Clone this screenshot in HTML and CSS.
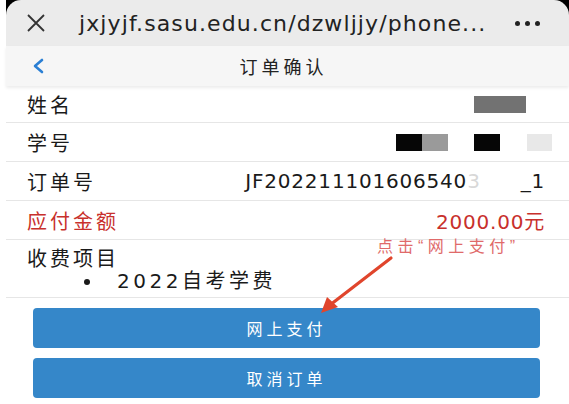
FILE: index.html
```html
<!DOCTYPE html>
<html lang="zh">
<head>
<meta charset="utf-8">
<link rel="stylesheet" href="styles.css">
</head>
<body>
<div class="screen">
  <div class="chrome">
    <div class="urlbar">
      <span class="close">
        <svg width="20" height="20" viewBox="0 0 20 20"><path d="M2 2 L18 18 M18 2 L2 18" stroke="#333" stroke-width="1.8" fill="none"/></svg>
      </span>
      <span class="url">jxjyjf.sasu.edu.cn/dzwljjy/phone...</span>
      <span class="more"><i></i><i></i><i></i></span>
    </div>
    <div class="navbar">
      <span class="back">
        <svg width="14" height="16" viewBox="0 0 14 16"><path d="M10 2 L3 8 L10 14" stroke="#2a7fd4" stroke-width="2.6" fill="none" stroke-linecap="round" stroke-linejoin="round"/></svg>
      </span>
      <span class="title">订单确认</span>
      <span class="spacer"></span>
    </div>
  </div>
  <div class="list">
    <div class="row">
      <span class="label">姓名</span>
      <span class="value"><i class="blk gray w52"></i></span>
    </div>
    <div class="row">
      <span class="label">学号</span>
      <span class="value ids"><i class="blk black w26"></i><i class="blk mid w26"></i><i class="blk gap26"></i><i class="blk black w26"></i><i class="blk gap27"></i><i class="blk light w25"></i></span>
    </div>
    <div class="row">
      <span class="label">订单号</span>
      <span class="value num">JF202211101606540<span class="faded">3</span><span class="hole"></span>_1</span>
    </div>
    <div class="row red">
      <span class="label">应付金额</span>
      <span class="value num">2000.00元</span>
    </div>
    <div class="row items">
      <span class="label">收费项目</span>
      <ul class="fees"><li>2022自考学费</li></ul>
      <span class="hint">点击“网上支付”</span>
    </div>
  </div>
  <div class="actions">
    <button class="btn">网上支付</button>
    <button class="btn">取消订单</button>
  </div>
  <svg class="arrow" width="569" height="404" viewBox="0 0 569 404">
    <path d="M391 258 L330 305" stroke="#e0452c" stroke-width="3.2" fill="none" stroke-linecap="round"/>
    <path d="M321 313 L327 297 L338 307 Z" fill="#e0452c"/>
  </svg>
</div>
</body>
</html>
```
FILE: styles.css
```css
* { box-sizing: border-box; }
html, body { margin: 0; padding: 0; background: #fff; }
body {
  width: 569px;
  height: 404px;
  overflow: hidden;
  font-family: "DejaVu Sans", "Noto Sans CJK SC", sans-serif;
  color: #1a1a1a;
}
.screen { position: relative; width: 569px; height: 404px; }
.chrome {
  margin-left: 6px;
  background: linear-gradient(#000 0, #000 18px, transparent 18px);
}
.urlbar {
  height: 46px;
  background: #ebebeb;
  border-radius: 15px 15px 0 0;
  display: flex;
  align-items: center;
  padding: 0 0 0 20px;
}
.close { width: 20px; height: 20px; display: flex; }
.url {
  margin-left: 33px;
  font-size: 22px;
  letter-spacing: 1.1px;
  color: #222;
  flex: 1;
  white-space: nowrap;
}
.more { display: flex; gap: 5px; margin-right: 29px; }
.more i { width: 5px; height: 5px; border-radius: 50%; background: #222; display: block; }
.navbar {
  height: 40px;
  background: #f6f6f6;
  display: flex;
  align-items: center;
  padding: 0 0 0 26px;
  box-shadow: 0 2px 3px rgba(0,0,0,0.08);
  position: relative;
}
.back { width: 14px; height: 16px; display: flex; }
.title {
  flex: 1;
  text-align: center;
  font-family: "Noto Sans CJK SC", sans-serif;
  font-size: 18px;
  letter-spacing: 4px;
  color: #222;
  margin-left: -8px;
}
.spacer { width: 40px; }
.list { margin-left: 6px; }
.row {
  height: 39px;
  border-bottom: 1px solid #e6e6e6;
  display: flex;
  align-items: center;
  justify-content: space-between;
  padding: 0 24px 0 21px;
}
.row:first-child { height: 37px; }
.label {
  font-family: "Noto Sans CJK SC", sans-serif;
  font-size: 20px;
  letter-spacing: 3px;
  color: #1a1a1a;
}
.value { display: flex; align-items: center; }
.num { font-size: 20px; letter-spacing: 0.8px; color: #1a1a1a; display: block; }
.red .label, .red .num { color: #c8302c; }
.blk { display: block; height: 17px; }
.w52 { width: 52px; }
.w26 { width: 26px; }
.w25 { width: 25px; }
.gap26 { width: 26px; }
.gap27 { width: 27px; }
.gray { background: #727272; margin-right: 19px; }
.black { background: #060606; }
.mid { background: #9a9a9a; }
.light { background: #e8e8e8; }
.ids { margin-right: -7px; }
.faded { color: #d8d8d8; }
.hole { display: inline-block; width: 40px; }
.items {
  height: 58px;
  display: block;
  position: relative;
  padding-top: 6px;
}
.items .label { display: block; line-height: 24px; }
.fees {
  margin: 0;
  padding-left: 76px;
  line-height: 23px;
  font-size: 20px;
  letter-spacing: 3.5px;
}
.fees li { padding-left: 14px; }
.hint {
  position: absolute;
  left: 371px;
  top: -7px;
  font-family: "Liberation Sans", "Noto Sans CJK SC", sans-serif;
  font-size: 16px;
  letter-spacing: 4.5px;
  color: #e06a6a;
}
.actions {
  display: flex;
  flex-direction: column;
  gap: 10px;
  padding: 10px 29px 0 33px;
}
.btn {
  height: 40px;
  border: none;
  border-radius: 4px;
  background: #3587c9;
  color: #fff;
  font-family: "Noto Sans CJK SC", sans-serif;
  font-size: 16px;
  letter-spacing: 4px;
}
.arrow { position: absolute; left: 0; top: 0; pointer-events: none; }
```
